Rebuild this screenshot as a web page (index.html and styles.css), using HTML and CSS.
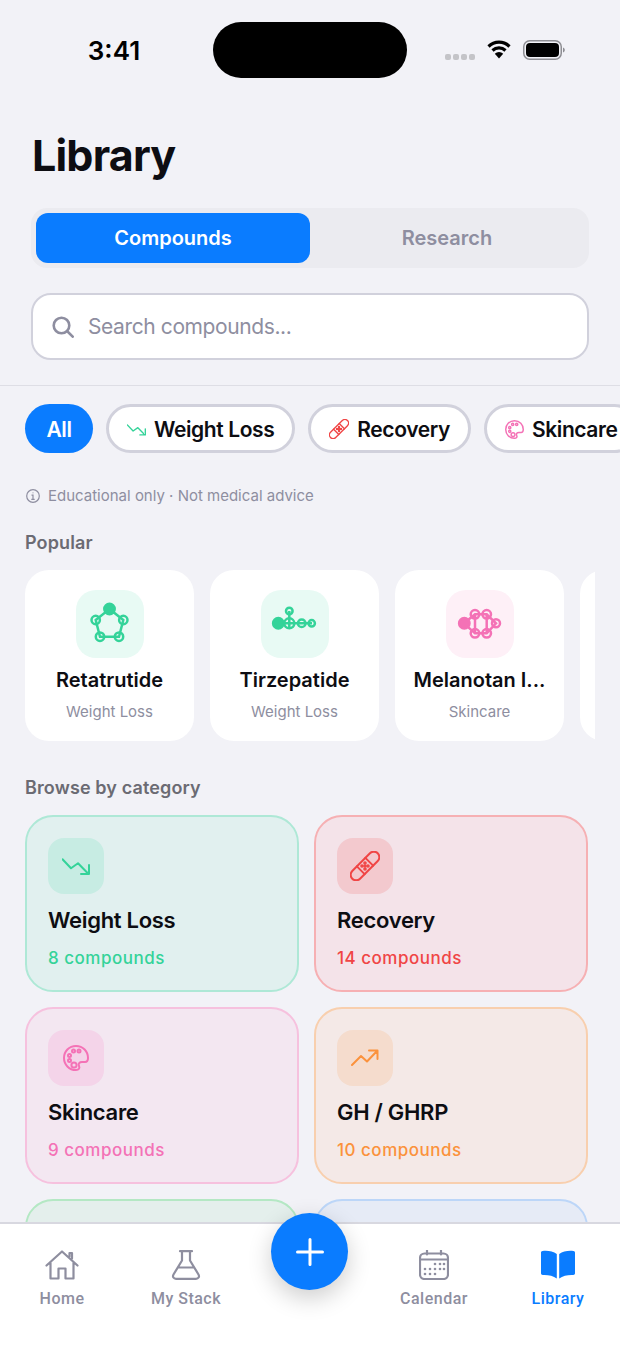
FILE: index.html
```html
<!DOCTYPE html>
<html lang="en">
  <head>
    <meta charset="UTF-8" />
    <meta name="viewport" content="width=device-width, initial-scale=1.0" />
    <title>Library</title>
    <link rel="stylesheet" href="styles.css">
  </head>
  <body>
    <!-- shared icons -->
    <svg class="icon-defs" aria-hidden="true">
      <symbol id="i-down" viewBox="0 0 28 28">
        <path d="M.5 7.3 9 16.3l7-5 9.8 10M19 22h8v-9" />
      </symbol>
      <symbol id="i-up" viewBox="0 0 28 18">
        <path d="M1 16 10 7l6 5.500L26 2M18 1.500h8.500V10" />
      </symbol>
      <symbol id="i-band" viewBox="0 0 30 30">
        <g transform="rotate(-45 15 15)">
          <rect x="-3" y="9.500" width="36" height="11" rx="5.500" />
          <path d="M9 9.500v11M21 9.500v11" />
        </g>
        <g class="dots">
          <circle cx="15" cy="12" r=".8" /><circle cx="18" cy="15" r=".8" />
          <circle cx="12" cy="15" r=".8" /><circle cx="15" cy="18" r=".8" />
          <circle cx="15" cy="15" r=".8" />
        </g>
      </symbol>
      <symbol id="i-palette" viewBox="0 0 26 26">
        <path d="M13 1C6 1 1 6.500 1 13s5 12 12 12c3 0 4-2 3-4-1-2.500.5-4 3-4h3c2 0 3-1.500 3-4C25 6.500 20 1 13 1Z" />
        <g class="dots">
          <circle cx="6.500" cy="10.500" r="1.500" /><circle cx="10.500" cy="6" r="1.500" />
          <circle cx="16" cy="6" r="1.500" /><circle cx="6.500" cy="15.500" r="1.500" />
          <circle cx="11" cy="20" r="2.600" />
        </g>
      </symbol>
    </svg>

    <div class="phone">
      <header class="status">
        <span class="time">3:41</span>
        <span class="island"></span>
        <span class="status-icons">
          <svg class="signal" width="30" height="6" viewBox="0 0 30 6">
            <rect x="0" width="6" height="6" rx="2" /><rect x="8" width="6" height="6" rx="2" />
            <rect x="16" width="6" height="6" rx="2" /><rect x="24" width="6" height="6" rx="2" />
          </svg>
          <svg class="wifi" width="24" height="19" viewBox="0 0 24 19">
            <path d="M1.500 6.500a15 15 0 0 1 21 0M5.500 10.500a9.500 9.500 0 0 1 13 0" />
            <path class="wifi-dot" d="M12 18.500 7.800 13.800a6 6 0 0 1 8.400 0Z" />
          </svg>
          <svg width="42" height="20" viewBox="0 0 42 20">
            <rect x=".75" y=".75" width="37.500" height="18.500" rx="6" fill="none" stroke="#8e8e93" stroke-width="1.500" />
            <rect x="3" y="3" width="33" height="14" rx="4" fill="#000" />
            <path d="M40 7.500c1.200.4 1.800 1.300 1.800 2.500s-.6 2.100-1.800 2.500Z" fill="#8e8e93" />
          </svg>
        </span>
      </header>

      <main class="content">
        <section class="top">
          <h1 class="page-title">Library</h1>
          <div class="segment">
            <div class="segment-item active">Compounds</div>
            <div class="segment-item">Research</div>
          </div>
          <div class="search">
            <svg class="search-icon" width="22" height="22" viewBox="0 0 22 22">
              <circle cx="9.500" cy="9.500" r="7.800" /><path d="m15.500 15.500 5.200 5.200" />
            </svg>
            <span>Search compounds...</span>
          </div>
        </section>

        <div class="chips">
          <div class="chip active">All</div>
          <div class="chip"><svg class="line green" width="19" height="19"><use href="#i-down" /></svg>Weight Loss</div>
          <div class="chip"><svg class="line red" width="20" height="20"><use href="#i-band" /></svg>Recovery</div>
          <div class="chip"><svg class="line pink" width="19" height="19"><use href="#i-palette" /></svg>Skincare</div>
        </div>

        <p class="note">
          <svg width="14" height="14" viewBox="0 0 14 14">
            <circle cx="7" cy="7" r="6.300" /><path d="M5.500 6.200H7v4M5.300 10.300h3.400M7 3.500v.8" />
          </svg>
          Educational only · Not medical advice
        </p>

        <h2 class="section-title">Popular</h2>
        <div class="popular">
          <div class="pop-card">
            <div class="pop-icon tile-green">
              <svg class="mol green" width="68" height="68" viewBox="0 0 68 68">
                <path d="M33.500 19 47.300 30 43 46.700H24L19.700 30Z" />
                <circle class="solid" cx="33.500" cy="19" r="5.200" />
                <circle cx="19.700" cy="30" r="4.200" /><circle cx="47.300" cy="30" r="4.200" />
                <circle cx="24" cy="46.700" r="4.200" /><circle cx="43" cy="46.700" r="4.200" />
              </svg>
            </div>
            <div class="pop-name">Retatrutide</div>
            <div class="pop-sub">Weight Loss</div>
          </div>
          <div class="pop-card">
            <div class="pop-icon tile-green">
              <svg class="mol green" width="68" height="68" viewBox="0 0 68 68">
                <path d="M17 33.300h34M28.300 21v18" />
                <circle class="solid" cx="17.300" cy="33.300" r="5.200" />
                <circle cx="28.300" cy="33.300" r="5" /><circle cx="28.300" cy="21" r="3.300" />
                <circle cx="40.700" cy="33.300" r="3.800" /><circle cx="50.700" cy="33.300" r="3.200" />
              </svg>
            </div>
            <div class="pop-name">Tirzepatide</div>
            <div class="pop-sub">Weight Loss</div>
          </div>
          <div class="pop-card">
            <div class="pop-icon tile-pink">
              <svg class="mol pink" width="68" height="68" viewBox="0 0 68 68">
                <path d="M18 33.300 29 24.300h11.700L50 33.300 40.700 43.300H29ZM29 24.300v19M40.700 24.300v19" />
                <circle class="solid" cx="18.300" cy="33.300" r="5.200" />
                <circle cx="29" cy="24.300" r="4.300" /><circle cx="40.700" cy="24.300" r="4.300" />
                <circle cx="29" cy="43.300" r="4.300" /><circle cx="40.700" cy="43.300" r="4.300" />
                <circle cx="50" cy="33.300" r="4" />
              </svg>
            </div>
            <div class="pop-name">Melanotan I...</div>
            <div class="pop-sub">Skincare</div>
          </div>
          <div class="pop-card"></div>
        </div>

        <h2 class="section-title browse">Browse by category</h2>
        <div class="cats">
          <div class="cat cat-green">
            <div class="cat-icon"><svg class="line" width="28" height="28"><use href="#i-down" /></svg></div>
            <div class="cat-name">Weight Loss</div>
            <div class="cat-count">8 compounds</div>
          </div>
          <div class="cat cat-red">
            <div class="cat-icon"><svg class="line" width="30" height="30"><use href="#i-band" /></svg></div>
            <div class="cat-name">Recovery</div>
            <div class="cat-count">14 compounds</div>
          </div>
          <div class="cat cat-pink">
            <div class="cat-icon"><svg class="line" width="26" height="26"><use href="#i-palette" /></svg></div>
            <div class="cat-name">Skincare</div>
            <div class="cat-count">9 compounds</div>
          </div>
          <div class="cat cat-orange">
            <div class="cat-icon"><svg class="line" width="28" height="18"><use href="#i-up" /></svg></div>
            <div class="cat-name">GH / GHRP</div>
            <div class="cat-count">10 compounds</div>
          </div>
          <div class="cat cat-lime"></div>
          <div class="cat cat-blue"></div>
        </div>
      </main>

      <nav class="tabbar">
        <div class="tab">
          <svg class="tab-icon" width="34" height="30" viewBox="0 0 34 30">
            <path d="M1.500 15.500 17 1.500l15.500 14M5.500 13v15.500h8V18.500h7v10h8V13M24.500 6.500V3h2.500v5.500" />
          </svg>
          <span>Home</span>
        </div>
        <div class="tab">
          <svg class="tab-icon" width="30" height="30" viewBox="0 0 30 30">
            <path d="M9 1.200h12M11 1.200v9.300L2.500 24.500c-1.300 2.300.2 4.300 2.500 4.300h20c2.300 0 3.800-2 2.500-4.300L19 10.500V1.200M7 17.500h16" />
          </svg>
          <span>My Stack</span>
        </div>
        <div class="tab-gap"></div>
        <div class="tab">
          <svg class="tab-icon" width="30" height="30" viewBox="0 0 30 30">
            <rect x="1" y="3.500" width="28" height="25.500" rx="4.500" />
            <path d="M1 9.500h28M8 .5v4M22 .5v4" />
            <g class="cal-dots">
              <circle cx="16" cy="14" r="1.300" /><circle cx="21" cy="14" r="1.300" /><circle cx="25" cy="14" r="1.300" />
              <circle cx="6" cy="19" r="1.300" /><circle cx="11" cy="19" r="1.300" /><circle cx="16" cy="19" r="1.300" /><circle cx="21" cy="19" r="1.300" /><circle cx="25" cy="19" r="1.300" />
              <circle cx="6" cy="24" r="1.300" /><circle cx="11" cy="24" r="1.300" /><circle cx="16" cy="24" r="1.300" />
            </g>
          </svg>
          <span>Calendar</span>
        </div>
        <div class="tab active">
          <svg width="34" height="30" viewBox="0 0 34 30">
            <path class="book" d="M15.800 4C12 1.300 6.500.3 1.500 1 .6 1.100 0 1.800 0 2.700v20.600c0 1 .9 1.800 1.900 1.700 5-.3 10.200.8 13.900 3.500ZM18.200 4C22 1.300 27.500.3 32.500 1c.9.1 1.500.8 1.500 1.700v20.600c0 1-.9 1.800-1.900 1.700-5-.3-10.200.8-13.900 3.500Z" />
          </svg>
          <span>Library</span>
        </div>
        <button class="fab" aria-label="Add">
          <svg width="28" height="28" viewBox="0 0 28 28"><path d="M14 1.500v25M1.500 14h25" /></svg>
        </button>
      </nav>
    </div>
  </body>
</html>
```

FILE: styles.css
```css
* {
  box-sizing: border-box;
}

html,
body {
  margin: 0;
  padding: 0;
}

body {
  font-family: "Inter", "Liberation Sans", sans-serif;
  color: #0d0d12;
  background: #f2f2f7;
}

.icon-defs {
  position: absolute;
  width: 0;
  height: 0;
}

.phone {
  position: relative;
  display: flex;
  flex-direction: column;
  width: 620px;
  height: 1348px;
  overflow: hidden;
}

/* status bar */
.status {
  display: flex;
  flex: none;
  align-items: center;
  height: 100px;
}

.time {
  flex: none;
  width: 213px;
  padding-left: 15px;
  font-size: 26px;
  font-weight: 600;
  text-align: center;
  color: #000;
}

.island {
  flex: none;
  width: 194px;
  height: 56px;
  border-radius: 28px;
  background: #000;
}

.status-icons {
  display: flex;
  flex: none;
  align-items: center;
  gap: 12px;
  margin-left: 38px;
}

.signal {
  margin-top: 14px;
  fill: #c4c4c8;
}

.wifi {
  margin-top: -1px;
}

.wifi path {
  fill: none;
  stroke: #000;
  stroke-width: 3.200;
}

.wifi .wifi-dot {
  fill: #000;
  stroke: none;
}

/* top block */
.top {
  display: flex;
  flex-direction: column;
  padding: 0 31px 25px;
  border-bottom: 1px solid #dedee5;
}

.page-title {
  margin: 24px 0 0 1px;
  font-size: 43px;
  line-height: 62px;
  font-weight: 700;
  letter-spacing: -0.8px;
}

.segment {
  display: flex;
  height: 60px;
  margin-top: 22px;
  padding: 5px;
  border-radius: 16px;
  background: #ebebf0;
}

.segment-item {
  display: flex;
  flex: 1;
  align-items: center;
  justify-content: center;
  border-radius: 12px;
  font-size: 20px;
  font-weight: 600;
  color: #8e8ea0;
}

.segment-item.active {
  background: #0a7cff;
  color: #fff;
}

.search {
  display: flex;
  align-items: center;
  gap: 14px;
  height: 67px;
  margin-top: 25px;
  padding-left: 19px;
  border: 2px solid #d1d1dc;
  border-radius: 20px;
  background: #fff;
  font-size: 21px;
  letter-spacing: -0.4px;
  color: #8e8ea0;
}

.search-icon {
  flex: none;
  fill: none;
  stroke: #8e8ea0;
  stroke-width: 2.600;
  stroke-linecap: round;
}

/* chips */
.chips {
  display: flex;
  gap: 13px;
  height: 49px;
  margin-top: 18px;
  padding-left: 25px;
  overflow: hidden;
}

.chip {
  display: flex;
  flex: none;
  align-items: center;
  gap: 8px;
  padding: 1px 18px 0;
  border: 3px solid #d1d1dc;
  border-radius: 25px;
  background: #fff;
  font-size: 21px;
  font-weight: 600;
  letter-spacing: -0.4px;
  color: #0d0d12;
}

.chip.active {
  justify-content: center;
  width: 68px;
  padding: 1px 0 0;
  border: none;
  background: #0a7cff;
  color: #fff;
}

.line {
  flex: none;
  fill: none;
  stroke: currentColor;
  stroke-width: 2;
  stroke-linecap: round;
  stroke-linejoin: round;
}

.line .dots {
  fill: currentColor;
  stroke: none;
}

.green {
  color: #34d399;
}

.red {
  color: #f04545;
}

.pink {
  color: #f472b6;
}

.note {
  display: flex;
  align-items: center;
  gap: 8px;
  margin: 33px 0 0;
  padding-left: 26px;
  font-size: 15px;
  line-height: 20px;
  color: #8e8ea0;
}

.note svg {
  fill: none;
  stroke: #8e8ea0;
  stroke-width: 1.200;
}

.section-title {
  margin: 26px 0 0;
  padding-left: 25px;
  font-size: 18px;
  line-height: 22px;
  font-weight: 600;
  letter-spacing: 0.12px;
  color: #6b6b73;
}

/* popular row */
.popular {
  display: flex;
  gap: 16px;
  width: 595px;
  margin-top: 16px;
  padding-left: 25px;
  overflow: hidden;
}

.pop-card {
  display: flex;
  flex: none;
  flex-direction: column;
  align-items: center;
  width: 169px;
  height: 171px;
  padding-top: 20px;
  border-radius: 24px;
  background: #fff;
}

.pop-icon {
  width: 68px;
  height: 68px;
  border-radius: 20px;
}

.tile-green {
  background: #e8faf4;
}

.tile-pink {
  background: #fef0f7;
}

.mol {
  display: block;
  fill: none;
  stroke: currentColor;
  stroke-width: 2.500;
}

.mol .solid {
  fill: currentColor;
}

.pop-name {
  margin-top: 9px;
  font-size: 20px;
  line-height: 26px;
  font-weight: 600;
  white-space: nowrap;
}

.pop-sub {
  margin-top: 9px;
  font-size: 15px;
  line-height: 20px;
  color: #8e8ea0;
}

.browse {
  margin-top: 36px;
}

/* categories */
.cats {
  display: grid;
  grid-template-columns: 274px 274px;
  gap: 15px;
  margin-top: 16px;
  padding-left: 25px;
}

.cat {
  height: 177px;
  padding: 21px 21px 0;
  border: 2px solid;
  border-radius: 28px;
}

.cat-icon {
  display: flex;
  align-items: center;
  justify-content: center;
  width: 56px;
  height: 56px;
  border-radius: 16px;
}

.cat-name {
  margin-top: 11px;
  font-size: 22px;
  line-height: 30px;
  font-weight: 600;
  letter-spacing: -0.3px;
  color: #0d0d12;
}

.cat-count {
  margin-top: 12px;
  font-size: 17px;
  line-height: 22px;
  font-weight: 500;
  letter-spacing: 0.5px;
}

.cat-green {
  border-color: #aee8d6;
  background: #e1f0ef;
  color: #34d399;
}

.cat-green .cat-icon {
  background: #c7ece3;
}

.cat-red {
  border-color: #f6b0b3;
  background: #f4e3e9;
  color: #f04545;
}

.cat-red .cat-icon {
  background: #f3c9ce;
}

.cat-pink {
  border-color: #f6c1de;
  background: #f3e7f1;
  color: #f472b6;
}

.cat-pink .cat-icon {
  background: #f4d4e9;
}

.cat-orange {
  border-color: #f8cfae;
  background: #f4e9e7;
  color: #fb923c;
}

.cat-orange .cat-icon {
  background: #f5dccd;
}

.cat-lime {
  border-color: #b4e8c4;
  background: #e4efec;
}

.cat-blue {
  border-color: #bcd6f8;
  background: #e6ebf6;
}

/* tab bar */
.tabbar {
  position: absolute;
  left: 0;
  right: 0;
  bottom: 0;
  display: grid;
  grid-template-columns: repeat(5, 124px);
  height: 126px;
  padding-top: 26px;
  border-top: 2px solid #d8d8e0;
  background: #fff;
}

.tab {
  display: flex;
  flex-direction: column;
  align-items: center;
  height: 64px;
  font-family: "Roboto", "Liberation Sans", sans-serif;
  font-size: 16px;
  font-weight: 500;
  letter-spacing: 0.5px;
  color: #8e8e9f;
}

.tab svg {
  flex: none;
  height: 30px;
  margin-bottom: 9px;
}

.tab.active {
  color: #0a7cff;
}

.tab-icon {
  fill: none;
  stroke: #8e8e9f;
  stroke-width: 2.200;
  stroke-linejoin: round;
  stroke-linecap: round;
}

.tab-icon .cal-dots {
  fill: #8e8e9f;
  stroke: none;
}

.book {
  fill: #0a7cff;
}

.fab {
  position: absolute;
  left: 271px;
  top: -11px;
  display: flex;
  align-items: center;
  justify-content: center;
  width: 77px;
  height: 77px;
  padding: 0;
  border: none;
  border-radius: 50%;
  background: #0a7cff;
  box-shadow: 0 8px 24px rgba(0, 0, 0, 0.2);
}

.fab path {
  fill: none;
  stroke: #fff;
  stroke-width: 3;
  stroke-linecap: round;
}
```
